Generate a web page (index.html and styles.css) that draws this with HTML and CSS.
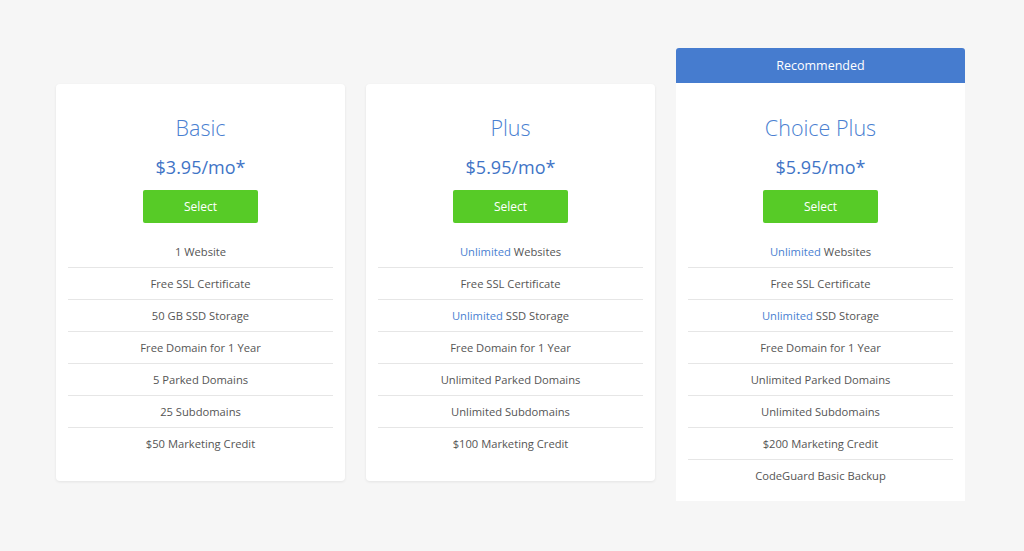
FILE: index.html
```html
<!DOCTYPE html>
<html lang="en">
<head>
<meta charset="utf-8">
<title>Plans</title>
<link rel="stylesheet" href="styles.css">
</head>
<body>
<div class="plans">
  <div class="plan">
    <div class="card">
      <h2 class="title">Basic</h2>
      <div class="price">$3.95/mo*</div>
      <a class="btn">Select</a>
      <ul class="features">
        <li>1 Website</li>
        <li>Free SSL Certificate</li>
        <li>50 GB SSD Storage</li>
        <li>Free Domain for 1 Year</li>
        <li>5 Parked Domains</li>
        <li>25 Subdomains</li>
        <li>$50 Marketing Credit</li>
      </ul>
    </div>
  </div>
  <div class="plan">
    <div class="card">
      <h2 class="title">Plus</h2>
      <div class="price">$5.95/mo*</div>
      <a class="btn">Select</a>
      <ul class="features">
        <li><span class="hl">Unlimited</span> Websites</li>
        <li>Free SSL Certificate</li>
        <li><span class="hl">Unlimited</span> SSD Storage</li>
        <li>Free Domain for 1 Year</li>
        <li>Unlimited Parked Domains</li>
        <li>Unlimited Subdomains</li>
        <li>$100 Marketing Credit</li>
      </ul>
    </div>
  </div>
  <div class="plan plan--featured">
    <div class="ribbon">Recommended</div>
    <div class="card card--featured">
      <h2 class="title">Choice Plus</h2>
      <div class="price">$5.95/mo*</div>
      <a class="btn">Select</a>
      <ul class="features">
        <li><span class="hl">Unlimited</span> Websites</li>
        <li>Free SSL Certificate</li>
        <li><span class="hl">Unlimited</span> SSD Storage</li>
        <li>Free Domain for 1 Year</li>
        <li>Unlimited Parked Domains</li>
        <li>Unlimited Subdomains</li>
        <li>$200 Marketing Credit</li>
        <li>CodeGuard Basic Backup</li>
      </ul>
    </div>
  </div>
</div>
</body>
</html>
```
FILE: styles.css
```css
* { box-sizing: border-box; }
html, body {
  margin: 0;
  padding: 0;
  background: #f6f6f6;
  font-family: "Open Sans", "Liberation Sans", sans-serif;
}
.plans {
  display: flex;
  align-items: flex-start;
  gap: 21px;
  padding: 48px 0 0 56px;
}
.plan {
  width: 289px;
  margin-top: 36px;
}
.plan--featured {
  margin-top: 0;
}
.ribbon {
  height: 35px;
  line-height: 35px;
  background: #467ccf;
  color: #fff;
  font-size: 12.5px;
  text-align: center;
  border-radius: 3px 3px 0 0;
}
.card {
  background: #fff;
  border-radius: 4px;
  box-shadow: 0 1px 3px rgba(0, 0, 0, 0.08);
  padding: 29px 0 21px;
  display: flex;
  flex-direction: column;
  align-items: center;
}
.card--featured {
  border-radius: 0;
  box-shadow: none;
  padding-top: 30px;
  padding-bottom: 9px;
}
.title {
  margin: 0;
  font-size: 21.5px;
  line-height: 30px;
  font-weight: 300;
  color: #4a7fd1;
}
.price {
  margin-top: 12px;
  font-size: 18px;
  line-height: 24px;
  color: #3f74c6;
}
.btn {
  margin-top: 11px;
  width: 115px;
  height: 33px;
  line-height: 33px;
  background: #57cb27;
  color: #fff;
  font-size: 12px;
  text-align: center;
  border-radius: 2px;
}
.features {
  list-style: none;
  margin: 13px 0 0;
  padding: 0 12px;
  width: 100%;
}
.features li {
  height: 32px;
  line-height: 31px;
  font-size: 11.2px;
  color: #555;
  text-align: center;
  border-bottom: 1px solid #e6e6e6;
}
.features li:last-child {
  border-bottom: none;
}
.hl {
  color: #4a7fd1;
}
```
